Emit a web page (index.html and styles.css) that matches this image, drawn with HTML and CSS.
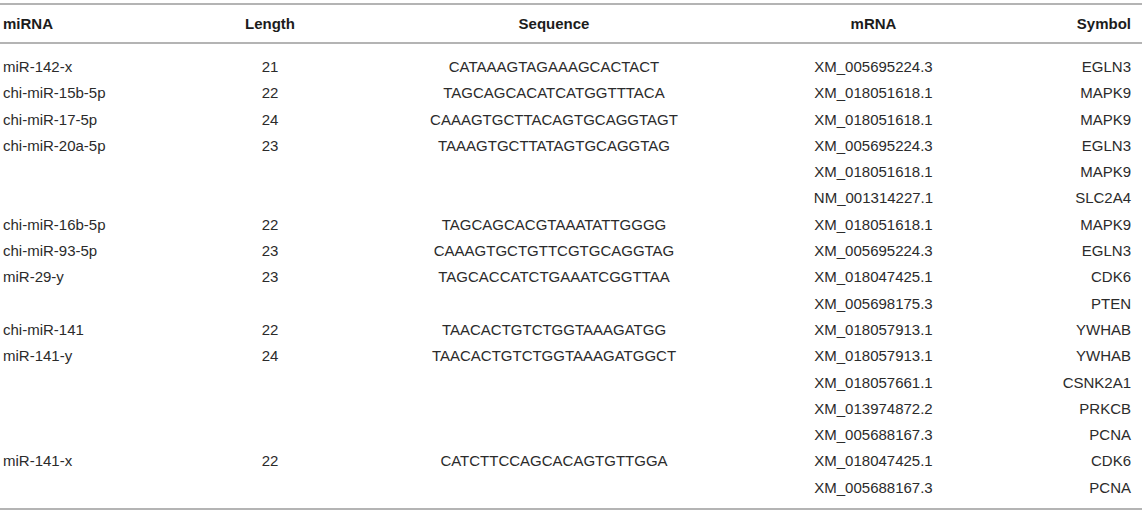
FILE: index.html
```html
<!DOCTYPE html>
<html lang="en">
<head>
<meta charset="utf-8">
<title>miRNA targets</title>
<link rel="stylesheet" href="styles.css">
</head>
<body>
<table class="data">
  <colgroup>
    <col class="c-mirna">
    <col class="c-len">
    <col class="c-seq">
    <col class="c-mrna">
    <col class="c-sym">
  </colgroup>
  <thead>
    <tr>
      <th class="left">miRNA</th>
      <th>Length</th>
      <th>Sequence</th>
      <th>mRNA</th>
      <th class="right">Symbol</th>
    </tr>
  </thead>
  <tbody>
    <tr><td class="left">miR-142-x</td><td>21</td><td>CATAAAGTAGAAAGCACTACT</td><td>XM_005695224.3</td><td class="right">EGLN3</td></tr>
    <tr><td class="left">chi-miR-15b-5p</td><td>22</td><td>TAGCAGCACATCATGGTTTACA</td><td>XM_018051618.1</td><td class="right">MAPK9</td></tr>
    <tr><td class="left">chi-miR-17-5p</td><td>24</td><td>CAAAGTGCTTACAGTGCAGGTAGT</td><td>XM_018051618.1</td><td class="right">MAPK9</td></tr>
    <tr><td class="left">chi-miR-20a-5p</td><td>23</td><td>TAAAGTGCTTATAGTGCAGGTAG</td><td>XM_005695224.3</td><td class="right">EGLN3</td></tr>
    <tr><td class="left"></td><td></td><td></td><td>XM_018051618.1</td><td class="right">MAPK9</td></tr>
    <tr><td class="left"></td><td></td><td></td><td>NM_001314227.1</td><td class="right">SLC2A4</td></tr>
    <tr><td class="left">chi-miR-16b-5p</td><td>22</td><td>TAGCAGCACGTAAATATTGGGG</td><td>XM_018051618.1</td><td class="right">MAPK9</td></tr>
    <tr><td class="left">chi-miR-93-5p</td><td>23</td><td>CAAAGTGCTGTTCGTGCAGGTAG</td><td>XM_005695224.3</td><td class="right">EGLN3</td></tr>
    <tr><td class="left">miR-29-y</td><td>23</td><td>TAGCACCATCTGAAATCGGTTAA</td><td>XM_018047425.1</td><td class="right">CDK6</td></tr>
    <tr><td class="left"></td><td></td><td></td><td>XM_005698175.3</td><td class="right">PTEN</td></tr>
    <tr><td class="left">chi-miR-141</td><td>22</td><td>TAACACTGTCTGGTAAAGATGG</td><td>XM_018057913.1</td><td class="right">YWHAB</td></tr>
    <tr><td class="left">miR-141-y</td><td>24</td><td>TAACACTGTCTGGTAAAGATGGCT</td><td>XM_018057913.1</td><td class="right">YWHAB</td></tr>
    <tr><td class="left"></td><td></td><td></td><td>XM_018057661.1</td><td class="right">CSNK2A1</td></tr>
    <tr><td class="left"></td><td></td><td></td><td>XM_013974872.2</td><td class="right">PRKCB</td></tr>
    <tr><td class="left"></td><td></td><td></td><td>XM_005688167.3</td><td class="right">PCNA</td></tr>
    <tr><td class="left">miR-141-x</td><td>22</td><td>CATCTTCCAGCACAGTGTTGGA</td><td>XM_018047425.1</td><td class="right">CDK6</td></tr>
    <tr><td class="left"></td><td></td><td></td><td>XM_005688167.3</td><td class="right">PCNA</td></tr>
  </tbody>
</table>
</body>
</html>
```

FILE: styles.css
```css
html, body {
  margin: 0;
  padding: 0;
  background: #ffffff;
}

body {
  font-family: "Liberation Sans", Arial, Helvetica, sans-serif;
  font-size: 15px;
  color: #2b2b2b;
}

.data {
  width: 1142px;
  margin-top: 3px;
  border-collapse: collapse;
  table-layout: fixed;
  border-top: 2px solid #b4b4b4;
  border-bottom: 2px solid #b4b4b4;
}

.c-mirna { width: 180px; }
.c-len { width: 180px; }
.c-seq { width: 388px; }
.c-mrna { width: 251px; }
.c-sym { width: 143px; }

.data th {
  height: 37px;
  padding: 0;
  font-weight: bold;
  color: #1c1c1c;
  text-align: center;
  vertical-align: middle;
  border-bottom: 2px solid #b4b4b4;
}

.data td {
  height: 26.3px;
  padding: 0;
  line-height: 26.3px;
  text-align: center;
  vertical-align: middle;
  white-space: nowrap;
}

.data tbody tr:first-child td {
  padding-top: 10px;
}

.data tbody tr:last-child td {
  padding-bottom: 7px;
}

.data .left {
  text-align: left;
  padding-left: 3px;
}

.data .right {
  text-align: right;
  padding-right: 11px;
}
```
